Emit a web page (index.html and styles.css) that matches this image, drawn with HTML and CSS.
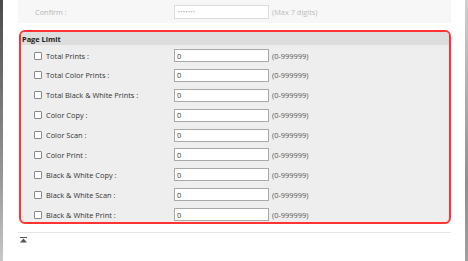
FILE: index.html
```html
<!DOCTYPE html>
<html>
<head>
<meta charset="utf-8">
<link rel="stylesheet" href="styles.css">
</head>
<body>
<div class="edge edge-left"></div>
<main class="page">
  <div class="confirm-row">
    <span class="confirm-label">Confirm :</span>
    <span class="pw-input">•••••••</span>
    <span class="hint">(Max 7 digits)</span>
  </div>
  <section class="limit-box">
    <div class="limit-head">Page Limit</div>
    <div class="limit-body">
      <div class="row"><span class="cb"></span><span class="label">Total Prints :</span><span class="num">0</span><span class="range">(0-999999)</span></div>
      <div class="row"><span class="cb"></span><span class="label">Total Color Prints :</span><span class="num">0</span><span class="range">(0-999999)</span></div>
      <div class="row"><span class="cb"></span><span class="label">Total Black &amp; White Prints :</span><span class="num">0</span><span class="range">(0-999999)</span></div>
      <div class="row"><span class="cb"></span><span class="label">Color Copy :</span><span class="num">0</span><span class="range">(0-999999)</span></div>
      <div class="row"><span class="cb"></span><span class="label">Color Scan :</span><span class="num">0</span><span class="range">(0-999999)</span></div>
      <div class="row"><span class="cb"></span><span class="label">Color Print :</span><span class="num">0</span><span class="range">(0-999999)</span></div>
      <div class="row"><span class="cb"></span><span class="label">Black &amp; White Copy :</span><span class="num">0</span><span class="range">(0-999999)</span></div>
      <div class="row"><span class="cb"></span><span class="label">Black &amp; White Scan :</span><span class="num">0</span><span class="range">(0-999999)</span></div>
      <div class="row"><span class="cb"></span><span class="label">Black &amp; White Print :</span><span class="num">0</span><span class="range">(0-999999)</span></div>
    </div>
  </section>
  <div class="sep"></div>
  <div class="top-link">
    <svg width="7" height="6" viewBox="0 0 7 6"><rect x="0" y="0" width="7" height="1" fill="#555"/><polygon points="3.5,1.5 7,5.5 0,5.5" fill="#555"/></svg>
  </div>
</main>
<div class="edge edge-right"></div>
</body>
</html>
```
FILE: styles.css
```css
html, body {
  margin: 0;
  padding: 0;
  background: #fff;
}
body {
  display: flex;
  width: 468px;
  height: 261px;
  overflow: hidden;
  font-family: "Open Sans", "Liberation Sans", sans-serif;
  font-size: 7.4px;
  color: #333;
}
.edge {
  width: 3px;
  flex: none;
}
.edge-left {
  background: linear-gradient(to bottom, #4a4a4a, #9a9a9a 70%, #c8c8c8);
}
.edge-right {
  background: linear-gradient(to bottom, #cfcfcf, #8f8f8f 70%, #a0a0a0);
}
.page {
  flex: 1;
  padding: 0 14px 0 15px;
}
.confirm-row {
  height: 23px;
  background: #f7f7f7;
  display: flex;
  align-items: center;
  padding-left: 17px;
}
.confirm-label {
  width: 139px;
  color: #b5b5b5;
}
.pw-input {
  box-sizing: border-box;
  width: 95px;
  height: 14px;
  border: 1px solid #dcdcdc;
  background: #fff;
  color: #9a9a9a;
  font-size: 5px;
  letter-spacing: 0.6px;
  padding-left: 3px;
  display: flex;
  align-items: center;
}
.hint {
  margin-left: 3px;
  color: #bbb;
}
.limit-box {
  margin: 7px 0 0 1px;
  border: 2px solid #f33;
  border-radius: 6px;
  background: #eeeeee;
  overflow: hidden;
}
.limit-head {
  height: 13px;
  background: #dedede;
  font-weight: 700;
  color: #222;
  padding-left: 1px;
  display: flex;
  align-items: center;
}
.limit-body {
  padding: 4px 0 1px;
  display: flex;
  flex-direction: column;
  gap: 6.875px;
}
.row {
  height: 13px;
  display: flex;
  align-items: center;
}
.cb {
  box-sizing: border-box;
  width: 8px;
  height: 8px;
  margin-left: 13px;
  border: 1px solid #8a8a8a;
  border-radius: 1px;
  background: #fff;
}
.label {
  width: 128px;
  margin-left: 4px;
  color: #333;
}
.num {
  box-sizing: border-box;
  width: 95px;
  height: 13px;
  border: 1px solid #a9a9a9;
  background: #fff;
  padding-left: 2px;
  display: flex;
  align-items: center;
  color: #333;
}
.range {
  margin-left: 3px;
  color: #555;
}
.sep {
  margin-top: 8px;
  height: 1px;
  background: #e6e6e6;
}
.top-link {
  padding: 4px 0 0 2px;
  line-height: 0;
}
```
